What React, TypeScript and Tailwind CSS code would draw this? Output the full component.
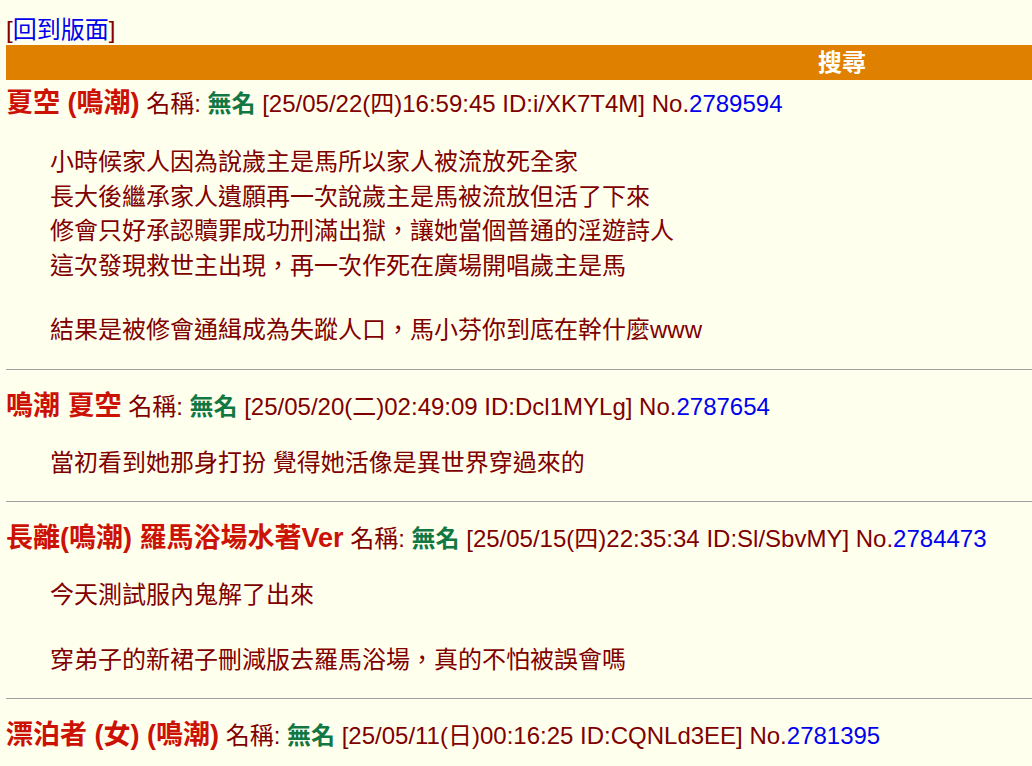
import React from 'react';

interface Post {
  title: string;
  date: string;
  no: string;
  body: (string | null)[];
}

const posts: Post[] = [
  {
    title: '夏空 (鳴潮)',
    date: '[25/05/22(四)16:59:45 ID:i/XK7T4M] No.',
    no: '2789594',
    body: [
      '小時候家人因為說歲主是馬所以家人被流放死全家',
      '長大後繼承家人遺願再一次說歲主是馬被流放但活了下來',
      '修會只好承認贖罪成功刑滿出獄，讓她當個普通的淫遊詩人',
      '這次發現救世主出現，再一次作死在廣場開唱歲主是馬',
      null,
      '結果是被修會通緝成為失蹤人口，馬小芬你到底在幹什麼www',
    ],
  },
  {
    title: '鳴潮 夏空',
    date: '[25/05/20(二)02:49:09 ID:Dcl1MYLg] No.',
    no: '2787654',
    body: ['當初看到她那身打扮 覺得她活像是異世界穿過來的'],
  },
  {
    title: '長離(鳴潮) 羅馬浴場水著Ver',
    date: '[25/05/15(四)22:35:34 ID:Sl/SbvMY] No.',
    no: '2784473',
    body: ['今天測試服內鬼解了出來', null, '穿弟子的新裙子刪減版去羅馬浴場，真的不怕被誤會嗎'],
  },
  {
    title: '漂泊者 (女) (鳴潮)',
    date: '[25/05/11(日)00:16:25 ID:CQNLd3EE] No.',
    no: '2781395',
    body: [],
  },
];

function PostBlock({ post, first }: { post: Post; first: boolean }) {
  return (
    <div className={first ? 'mt-[6px]' : 'mt-[19px]'}>
      <div className="leading-[34px] whitespace-nowrap">
        <span className="text-[27px] font-bold text-[#cc1105]">{post.title}</span>{' '}
        <span>名稱: </span>
        <span className="font-bold text-[#117743]">無名</span>{' '}
        <span>{post.date}</span>
        <a className="text-[#0000ee]">{post.no}</a>
      </div>
      {post.body.length > 0 && (
        <div className={`ml-[44px] mb-[21px] ${first ? 'mt-[24px]' : 'mt-[22px]'}`}>
          {post.body.map((line, i) =>
            line === null ? (
              <div key={i} className="h-[30px]" />
            ) : (
              <div key={i} className="leading-[34.5px]">
                {line}
              </div>
            )
          )}
        </div>
      )}
      {post.body.length > 0 && <div className="border-t border-[#a0a0a0]" />}
    </div>
  );
}

export default function App() {
  return (
    <div
      className="min-h-[766px] bg-[#ffffee] pl-[6px] text-[24px] text-[#800000] overflow-hidden"
      style={{ fontFamily: '"Liberation Sans", "Noto Sans CJK TC", sans-serif' }}
    >
      <div className="pt-[18px] leading-[24px]">
        [<a className="text-[#0000ee]">回到版面</a>]
      </div>
      <div className="mt-[3px] h-[35px] bg-[#e08000] pl-[812px] font-bold leading-[35px] text-white">
        搜尋
      </div>
      {posts.map((p, i) => (
        <PostBlock key={p.no} post={p} first={i === 0} />
      ))}
    </div>
  );
}
